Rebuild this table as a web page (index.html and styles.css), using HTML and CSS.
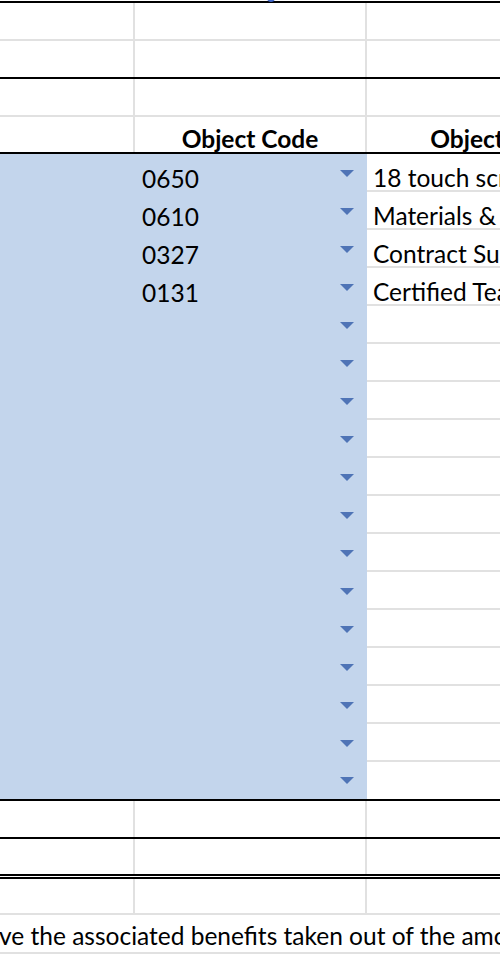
FILE: index.html
```html
<!DOCTYPE html>
<html lang="en">
<head>
    <meta charset="UTF-8">
    <meta name="viewport" content="width=device-width, initial-scale=1.0">
    <title>Budget Sheet</title>
    <link rel="stylesheet" href="styles.css">
</head>
<body>
    <div class="sheet">
        <span class="handle"></span>

        <div class="row top black-top gray-line">
            <div class="cell"></div><div class="cell"></div><div class="cell last"></div>
        </div>
        <div class="row black-line">
            <div class="cell"></div><div class="cell"></div><div class="cell last"></div>
        </div>
        <div class="row gray-line">
            <div class="cell"></div><div class="cell"></div><div class="cell last"></div>
        </div>
        <div class="row head black-line">
            <div class="cell"></div>
            <div class="cell title">Object Code</div>
            <div class="cell last title">Object Description</div>
        </div>

        <div class="picks">
            <div class="pick"><div class="fill"></div><div class="fill code"><span>0650</span><i class="arrow"></i></div><div class="desc">18 touch screen monitors</div></div>
            <div class="pick"><div class="fill"></div><div class="fill code"><span>0610</span><i class="arrow"></i></div><div class="desc">Materials &amp; Supplies</div></div>
            <div class="pick"><div class="fill"></div><div class="fill code"><span>0327</span><i class="arrow"></i></div><div class="desc">Contract Substitutes</div></div>
            <div class="pick"><div class="fill"></div><div class="fill code"><span>0131</span><i class="arrow"></i></div><div class="desc">Certified Teachers</div></div>
            <div class="pick"><div class="fill"></div><div class="fill code"><span></span><i class="arrow"></i></div><div class="desc"></div></div>
            <div class="pick"><div class="fill"></div><div class="fill code"><span></span><i class="arrow"></i></div><div class="desc"></div></div>
            <div class="pick"><div class="fill"></div><div class="fill code"><span></span><i class="arrow"></i></div><div class="desc"></div></div>
            <div class="pick"><div class="fill"></div><div class="fill code"><span></span><i class="arrow"></i></div><div class="desc"></div></div>
            <div class="pick"><div class="fill"></div><div class="fill code"><span></span><i class="arrow"></i></div><div class="desc"></div></div>
            <div class="pick"><div class="fill"></div><div class="fill code"><span></span><i class="arrow"></i></div><div class="desc"></div></div>
            <div class="pick"><div class="fill"></div><div class="fill code"><span></span><i class="arrow"></i></div><div class="desc"></div></div>
            <div class="pick"><div class="fill"></div><div class="fill code"><span></span><i class="arrow"></i></div><div class="desc"></div></div>
            <div class="pick"><div class="fill"></div><div class="fill code"><span></span><i class="arrow"></i></div><div class="desc"></div></div>
            <div class="pick"><div class="fill"></div><div class="fill code"><span></span><i class="arrow"></i></div><div class="desc"></div></div>
            <div class="pick"><div class="fill"></div><div class="fill code"><span></span><i class="arrow"></i></div><div class="desc"></div></div>
            <div class="pick"><div class="fill"></div><div class="fill code"><span></span><i class="arrow"></i></div><div class="desc"></div></div>
            <div class="pick end"><div class="fill"></div><div class="fill code"><span></span><i class="arrow"></i></div><div class="desc"></div></div>
        </div>

        <div class="row black-line">
            <div class="cell"></div><div class="cell"></div><div class="cell last"></div>
        </div>
        <div class="row short double-line">
            <div class="cell"></div><div class="cell"></div><div class="cell last"></div>
        </div>
        <div class="row shorter gray-line">
            <div class="cell"></div><div class="cell"></div><div class="cell last"></div>
        </div>
        <div class="note">ve the associated benefits taken out of the amount budgeted above.</div>
        <div class="row gray-line">
            <div class="cell"></div><div class="cell"></div><div class="cell last"></div>
        </div>
    </div>
</body>
</html>
```

FILE: styles.css
```css
*{
    box-sizing: border-box;
}
body{
    margin: 0;
    overflow: hidden;
    background-color: white;
    font-family: 'Lato', 'Liberation Sans', sans-serif;
    font-size: 24.5px;
    color: black;
}
.sheet{
    position: relative;
    width: 700px;
    padding-top: 1px;
}
.handle{
    position: absolute;
    left: 267px;
    top: -6px;
    width: 8px;
    height: 8px;
    border-radius: 50%;
    background-color: rgb(66, 104, 205);
}
.row{
    display: grid;
    grid-template-columns: 135px 232px 333px;
    height: 38px;
}
.row.short{
    height: 40px;
}
.row.shorter{
    height: 36px;
}
.black-top{
    border-top: 2px solid black;
    height: 40px !important;
}
.gray-line{
    border-bottom: 2px solid #e1e1e1;
}
.black-line{
    border-bottom: 2px solid black;
}
.double-line{
    border-bottom: 5px double black;
}
.cell{
    border-right: 2px solid #e1e1e1;
}
.cell.last{
    border-right: none;
}
.head{
    height: 37px;
}
.title{
    font-weight: bold;
    text-align: center;
    white-space: nowrap;
    overflow: hidden;
    line-height: 27px;
    padding-top: 8px;
}
.head .last{
    overflow: visible;
}

/* blue drop-down block */
.picks{
    border-bottom: 2px solid black;
}
.pick{
    display: grid;
    grid-template-columns: 135px 232px 333px;
    height: 38px;
}
.pick.end{
    height: 37px;
}
.fill{
    background-color: #c3d5ec;
}
.code{
    display: flex;
    justify-content: space-between;
    padding-left: 7px;
    padding-right: 13px;
}
.code span{
    align-self: flex-end;
    line-height: 26px;
}
.arrow{
    align-self: center;
    width: 0;
    height: 0;
    border-left: 7px solid transparent;
    border-right: 7px solid transparent;
    border-top: 7px solid #4f74b6;
}
.desc{
    display: flex;
    align-items: flex-end;
    line-height: 24px;
    padding-left: 6px;
    border-bottom: 2px solid #e1e1e1;
    white-space: nowrap;
    overflow: hidden;
}
.pick.end .desc{
    border-bottom: none;
}

.note{
    height: 39px;
    border-bottom: 2px solid #e1e1e1;
    white-space: nowrap;
    line-height: 30px;
    padding-top: 6px;
    text-indent: -1px;
}
```
